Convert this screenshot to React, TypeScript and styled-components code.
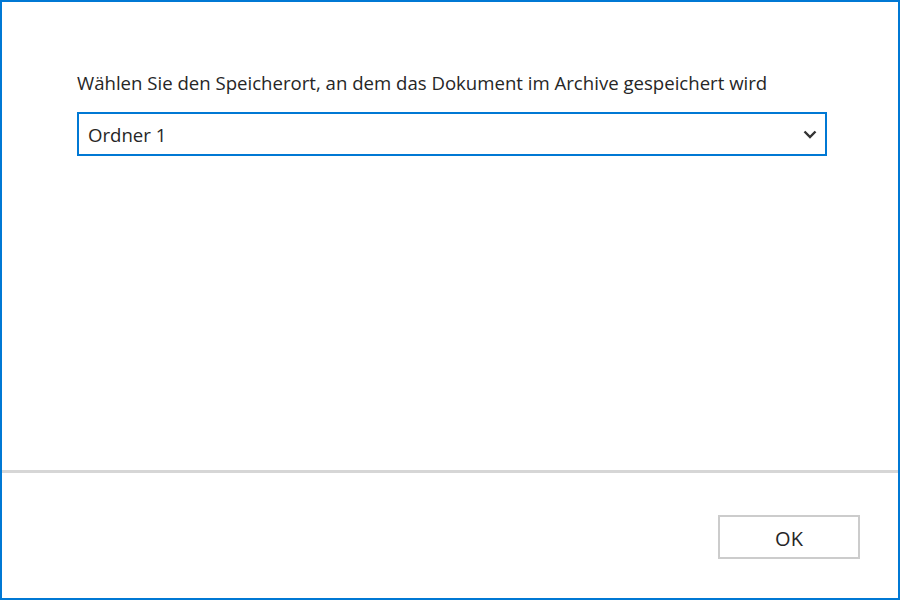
import React from "react";
import styled, { createGlobalStyle } from "styled-components";

const Global = createGlobalStyle`
  html, body { margin: 0; padding: 0; background: #ffffff; }
  body { font-family: "Open Sans", "Noto Sans", "Liberation Sans", sans-serif; color: #262626; }
  * { box-sizing: border-box; }
`;

const Window = styled.div`
  width: 900px;
  height: 600px;
  border: 2px solid #0078d4;
  display: flex;
  flex-direction: column;
  background: #ffffff;
`;

const Body = styled.div`
  flex: 1;
  padding: 68px 71px 0 75px;
  display: flex;
  flex-direction: column;
`;

const Label = styled.label`
  font-size: 18.6px;
  line-height: 26px;
  color: #262626;
  margin-bottom: 16px;
  white-space: nowrap;
`;

const SelectBox = styled.div`
  height: 44px;
  border: 2px solid #0078d4;
  display: flex;
  align-items: center;
  padding: 1px 8px 0 9px;
  font-size: 18.6px;
  color: #262626;
`;

const Value = styled.span`
  flex: 1;
`;

const Chevron = styled.svg`
  width: 14px;
  height: 9px;
`;

const Separator = styled.div`
  height: 3px;
  background: #d6d6d6;
`;

const Footer = styled.div`
  height: 125px;
  display: flex;
  justify-content: flex-end;
  align-items: flex-start;
  padding: 42px 38px 0 0;
`;

const Button = styled.button`
  width: 142px;
  height: 44px;
  border: 2px solid #cccccc;
  background: #ffffff;
  font-family: inherit;
  font-size: 20px;
  padding: 2px 0 0;
  color: #262626;
  cursor: pointer;
`;

export default function App() {
  return (
    <>
      <Global />
      <Window>
        <Body>
          <Label>Wählen Sie den Speicherort, an dem das Dokument im Archive gespeichert wird</Label>
          <SelectBox>
            <Value>Ordner 1</Value>
            <Chevron viewBox="0 0 14 9">
              <path d="M1.5 1.5 L7 7 L12.5 1.5" fill="none" stroke="#333" strokeWidth="2.4" />
            </Chevron>
          </SelectBox>
        </Body>
        <Separator />
        <Footer>
          <Button>OK</Button>
        </Footer>
      </Window>
    </>
  );
}
